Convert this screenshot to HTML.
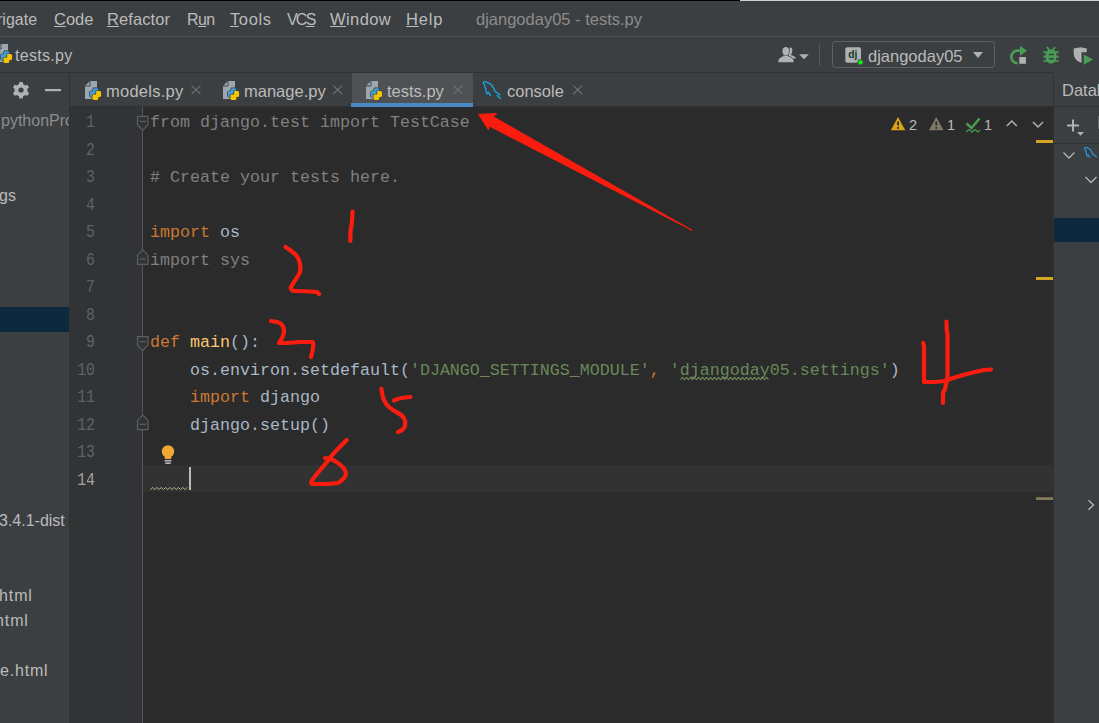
<!DOCTYPE html>
<html><head><meta charset="utf-8">
<style>
html,body{margin:0;padding:0;}
body{width:1099px;height:723px;overflow:hidden;position:relative;background:#3C3F41;font-family:"Liberation Sans",sans-serif;}
.a{position:absolute;}
.t{position:absolute;white-space:pre;color:#BBBBBB;font-size:16px;line-height:20px;}
.m{position:absolute;white-space:pre;font-family:"Liberation Mono",monospace;font-size:16.67px;line-height:20px;}
u{text-decoration:underline;text-decoration-thickness:1px;text-underline-offset:1px;text-decoration-color:#BBBBBB;}
</style></head>
<body>
<!-- top strip -->
<div class="a" style="left:0;top:0;width:740px;height:1px;background:#000"></div>
<div class="a" style="left:740px;top:0;width:359px;height:1px;background:#CFCFCF"></div>

<!-- menu bar -->
<div class="t" style="left:-3px;top:9.9px;font-size:16px">rigate</div>
<div class="t" style="left:54px;top:9.4px;font-size:16.5px"><u>C</u>ode</div>
<div class="t" style="left:107px;top:9.4px;font-size:16.5px;letter-spacing:0.1px"><u>R</u>efactor</div>
<div class="t" style="left:187px;top:9.9px;letter-spacing:-0.6px">R<u>u</u>n</div>
<div class="t" style="left:230px;top:9.4px;font-size:16.5px;letter-spacing:0.6px"><u>T</u>ools</div>
<div class="t" style="left:287px;top:9.9px;letter-spacing:-1.8px">VC<u>S</u></div>
<div class="t" style="left:330px;top:9.4px;font-size:16.5px;letter-spacing:0.4px"><u>W</u>indow</div>
<div class="t" style="left:406px;top:9.4px;font-size:16.5px;letter-spacing:0.8px"><u>H</u>elp</div>
<div class="t" style="left:476px;top:9.4px;color:#8C8C8C;font-size:16.5px">djangoday05 - tests.py</div>
<div class="a" style="left:0;top:36px;width:1099px;height:1px;background:#515151"></div>

<!-- nav bar -->
<div class="t" style="left:15px;top:46px;letter-spacing:0.3px">tests.py</div>
<div class="a" style="left:0;top:72px;width:1099px;height:1px;background:#323232"></div>

<!-- left panel -->
<div class="a" style="left:0;top:73px;width:69px;height:650px;overflow:hidden">
<div class="a" style="left:0;top:234px;width:69px;height:25px;background:#0D293E"></div>
<div class="t" style="left:1px;top:38px;color:#8C8C8C">pythonProject</div>
<div class="t" style="left:-1px;top:113px">gs</div>
<div class="t" style="left:-1px;top:438px">3.4.1-dist</div>
<div class="t" style="left:-1px;top:513px;letter-spacing:0.9px">html</div>
<div class="t" style="left:-5px;top:538px;letter-spacing:0.9px">html</div>
<div class="t" style="left:0px;top:588px;letter-spacing:0.8px">e.html</div>
</div>
<!-- left panel divider -->
<div class="a" style="left:69px;top:72px;width:1px;height:651px;background:#323232"></div>

<!-- tab bar -->
<div class="a" style="left:70px;top:106px;width:983px;height:1px;background:#323232"></div>
<div class="a" style="left:352px;top:73px;width:121px;height:30px;background:#4E5254"></div>
<div class="a" style="left:351px;top:103px;width:122px;height:4px;background:#4A88C7"></div>
<div class="t" style="left:106px;top:80.5px;font-size:16.5px;letter-spacing:0.25px">models.py</div>
<div class="t" style="left:244px;top:80.5px;font-size:16.5px">manage.py</div>
<div class="t" style="left:387px;top:80.5px;font-size:16.5px">tests.py</div>
<div class="t" style="left:507px;top:80.5px;font-size:16.5px">console</div>

<!-- editor -->
<div class="a" style="left:70px;top:107px;width:73px;height:616px;background:#313335"></div>
<div class="a" style="left:143px;top:107px;width:910px;height:616px;background:#2B2B2B"></div>
<div class="a" style="left:143px;top:465px;width:910px;height:27px;background:#323232"></div>
<div class="a" style="left:142px;top:107px;width:1px;height:616px;background:#555555"></div>

<!-- gutter numbers -->
<div class="m" style="left:0;width:95px;text-align:right;font-size:17px;transform:scale(0.87,1.1);transform-origin:94.5px 14.5px;top:113.06px;color:#606366">1</div>
<div class="m" style="left:0;width:95px;text-align:right;font-size:17px;transform:scale(0.87,1.1);transform-origin:94.5px 14.5px;top:140.59px;color:#606366">2</div>
<div class="m" style="left:0;width:95px;text-align:right;font-size:17px;transform:scale(0.87,1.1);transform-origin:94.5px 14.5px;top:168.12px;color:#606366">3</div>
<div class="m" style="left:0;width:95px;text-align:right;font-size:17px;transform:scale(0.87,1.1);transform-origin:94.5px 14.5px;top:195.65px;color:#606366">4</div>
<div class="m" style="left:0;width:95px;text-align:right;font-size:17px;transform:scale(0.87,1.1);transform-origin:94.5px 14.5px;top:223.18px;color:#606366">5</div>
<div class="m" style="left:0;width:95px;text-align:right;font-size:17px;transform:scale(0.87,1.1);transform-origin:94.5px 14.5px;top:250.71px;color:#606366">6</div>
<div class="m" style="left:0;width:95px;text-align:right;font-size:17px;transform:scale(0.87,1.1);transform-origin:94.5px 14.5px;top:278.24px;color:#606366">7</div>
<div class="m" style="left:0;width:95px;text-align:right;font-size:17px;transform:scale(0.87,1.1);transform-origin:94.5px 14.5px;top:305.77px;color:#606366">8</div>
<div class="m" style="left:0;width:95px;text-align:right;font-size:17px;transform:scale(0.87,1.1);transform-origin:94.5px 14.5px;top:333.30px;color:#606366">9</div>
<div class="m" style="left:0;width:95px;text-align:right;font-size:17px;transform:scale(0.87,1.1);transform-origin:94.5px 14.5px;top:360.83px;color:#606366">10</div>
<div class="m" style="left:0;width:95px;text-align:right;font-size:17px;transform:scale(0.87,1.1);transform-origin:94.5px 14.5px;top:388.36px;color:#606366">11</div>
<div class="m" style="left:0;width:95px;text-align:right;font-size:17px;transform:scale(0.87,1.1);transform-origin:94.5px 14.5px;top:415.89px;color:#606366">12</div>
<div class="m" style="left:0;width:95px;text-align:right;font-size:17px;transform:scale(0.87,1.1);transform-origin:94.5px 14.5px;top:443.42px;color:#606366">13</div>
<div class="m" style="left:0;width:95px;text-align:right;font-size:17px;transform:scale(0.87,1.1);transform-origin:94.5px 14.5px;top:470.95px;color:#A4A3A3">14</div>
<!-- code -->
<div class="m" style="left:150px;top:113.06px"><span style="color:#808080">from django.test import TestCase</span></div>
<div class="m" style="left:150px;top:168.12px"><span style="color:#808080"># Create your tests here.</span></div>
<div class="m" style="left:150px;top:223.18px"><span style="color:#CC7832">import</span><span style="color:#A9B7C6"> os</span></div>
<div class="m" style="left:150px;top:250.71px"><span style="color:#808080">import sys</span></div>
<div class="m" style="left:150px;top:333.30px"><span style="color:#CC7832">def</span><span style="color:#A9B7C6"> </span><span style="color:#FFC66D">main</span><span style="color:#A9B7C6">():</span></div>
<div class="m" style="left:150px;top:360.83px"><span style="color:#A9B7C6">    os.environ.setdefault(</span><span style="color:#6A8759">'DJANGO_SETTINGS_MODULE'</span><span style="color:#CC7832">, </span><span style="color:#6A8759">'djangoday05.settings'</span><span style="color:#A9B7C6">)</span></div>
<div class="m" style="left:150px;top:388.36px"><span style="color:#A9B7C6">    </span><span style="color:#CC7832">import</span><span style="color:#A9B7C6"> django</span></div>
<div class="m" style="left:150px;top:415.89px"><span style="color:#A9B7C6">    django.setup()</span></div>
<!-- right panel -->
<div class="a" style="left:1054px;top:72px;width:45px;height:651px;background:#3C3F41"></div>
<div class="a" style="left:1053px;top:72px;width:1px;height:651px;background:#323232"></div>
<div class="a" style="left:1054px;top:106px;width:45px;height:1px;background:#323232"></div>
<div class="a" style="left:1054px;top:143px;width:45px;height:1px;background:#323232"></div>
<div class="a" style="left:1054px;top:218px;width:45px;height:24px;background:#0D293E"></div>
<div class="t" style="left:1062px;top:80px;font-size:16.5px">Database</div>

<!-- overlay -->
<svg class="a" style="left:0;top:0" width="1099" height="723" viewBox="0 0 1099 723">
<!-- nav bar python icon (clipped) -->
<g transform="translate(-89,-37)">
<path d="M85,86 L90,81 H97 V99 H85 Z" fill="#9AA7B0"/>
<path d="M85,86 H90 V81" fill="none" stroke="#3C3F41" stroke-width="0.9"/>
<g stroke="#3C3F41" stroke-width="1.4" paint-order="stroke">
<path d="M93,88.3 H96.8 Q98.3,88.3 98.3,89.8 V93.6 H94.6 V96.9 H91.4 Q89.9,96.9 89.9,95.4 V92.6 Q89.9,91.1 91.4,91.1 H93 V89.8 Q93,88.3 94.5,88.3 Z" fill="#3D9FD8"/>
<path d="M99.6,91.1 Q101.1,91.1 101.1,92.6 V95.4 Q101.1,96.9 99.6,96.9 H98.3 V98.4 Q98.3,99.9 96.8,99.9 H94 Q92.5,99.9 92.5,98.4 V94.6 H96.2 V91.1 Z" fill="#F5C400"/>
</g>
</g>
<!-- gear -->
<g transform="translate(21,90)">
<path d="M-1.6,-8 h3.2 l0.6,2.3 a6,6 0 0 1 1.9,1.1 l2.3,-0.7 l1.6,2.8 l-1.7,1.6 a6,6 0 0 1 0,2.2 l1.7,1.6 l-1.6,2.8 l-2.3,-0.7 a6,6 0 0 1 -1.9,1.1 l-0.6,2.3 h-3.2 l-0.6,-2.3 a6,6 0 0 1 -1.9,-1.1 l-2.3,0.7 l-1.6,-2.8 l1.7,-1.6 a6,6 0 0 1 0,-2.2 l-1.7,-1.6 l1.6,-2.8 l2.3,0.7 a6,6 0 0 1 1.9,-1.1 z" fill="#AFB1B3"/>
<circle cx="0" cy="0" r="2.6" fill="#3C3F41"/>
</g>
<rect x="45" y="89" width="16" height="2.2" fill="#AFB1B3"/>
<!-- tabs icons -->
<g transform="translate(0,0)">
<path d="M85,86 L90,81 H97 V99 H85 Z" fill="#9AA7B0"/>
<path d="M85,86 H90 V81" fill="none" stroke="#3C3F41" stroke-width="0.9"/>
<g stroke="#3C3F41" stroke-width="1.4" paint-order="stroke">
<path d="M93,88.3 H96.8 Q98.3,88.3 98.3,89.8 V93.6 H94.6 V96.9 H91.4 Q89.9,96.9 89.9,95.4 V92.6 Q89.9,91.1 91.4,91.1 H93 V89.8 Q93,88.3 94.5,88.3 Z" fill="#3D9FD8"/>
<path d="M99.6,91.1 Q101.1,91.1 101.1,92.6 V95.4 Q101.1,96.9 99.6,96.9 H98.3 V98.4 Q98.3,99.9 96.8,99.9 H94 Q92.5,99.9 92.5,98.4 V94.6 H96.2 V91.1 Z" fill="#F5C400"/>
</g>
</g>
<g transform="translate(138,0)">
<path d="M85,86 L90,81 H97 V99 H85 Z" fill="#9AA7B0"/>
<path d="M85,86 H90 V81" fill="none" stroke="#3C3F41" stroke-width="0.9"/>
<g stroke="#3C3F41" stroke-width="1.4" paint-order="stroke">
<path d="M93,88.3 H96.8 Q98.3,88.3 98.3,89.8 V93.6 H94.6 V96.9 H91.4 Q89.9,96.9 89.9,95.4 V92.6 Q89.9,91.1 91.4,91.1 H93 V89.8 Q93,88.3 94.5,88.3 Z" fill="#3D9FD8"/>
<path d="M99.6,91.1 Q101.1,91.1 101.1,92.6 V95.4 Q101.1,96.9 99.6,96.9 H98.3 V98.4 Q98.3,99.9 96.8,99.9 H94 Q92.5,99.9 92.5,98.4 V94.6 H96.2 V91.1 Z" fill="#F5C400"/>
</g>
</g>
<g transform="translate(281,0)">
<path d="M85,86 L90,81 H97 V99 H85 Z" fill="#9AA7B0"/>
<path d="M85,86 H90 V81" fill="none" stroke="#3C3F41" stroke-width="0.9"/>
<g stroke="#3C3F41" stroke-width="1.4" paint-order="stroke">
<path d="M93,88.3 H96.8 Q98.3,88.3 98.3,89.8 V93.6 H94.6 V96.9 H91.4 Q89.9,96.9 89.9,95.4 V92.6 Q89.9,91.1 91.4,91.1 H93 V89.8 Q93,88.3 94.5,88.3 Z" fill="#3D9FD8"/>
<path d="M99.6,91.1 Q101.1,91.1 101.1,92.6 V95.4 Q101.1,96.9 99.6,96.9 H98.3 V98.4 Q98.3,99.9 96.8,99.9 H94 Q92.5,99.9 92.5,98.4 V94.6 H96.2 V91.1 Z" fill="#F5C400"/>
</g>
</g>
<path d="M483.5,83.5 C483,81.5 485.5,81 487,82.5 C490,83 493,86 494.5,90.5 C495.5,92.5 498,93 500,94.8 M497.3,95.5 L500.5,98.5 M484,84 C485,86 486.3,89 486.3,92.5 L487.3,93.8 L488.3,92.2 L490.5,95.5" fill="none" stroke="#1BA1E2" stroke-width="1.4" stroke-linejoin="round" stroke-linecap="round"/>
<path d="M191.6,85.6 L200.4,94 M200.4,85.6 L191.6,94" stroke="#6B7073" stroke-width="1.2"/>
<path d="M333.3,85.6 L342.1,94 M342.1,85.6 L333.3,94" stroke="#6B7073" stroke-width="1.2"/>
<path d="M453.4,85.6 L462.2,94 M462.2,85.6 L453.4,94" stroke="#6B7073" stroke-width="1.2"/>
<path d="M573.4,85.6 L582.2,94 M582.2,85.6 L573.4,94" stroke="#6B7073" stroke-width="1.2"/>
<!-- right toolbar -->
<path d="M789.8,47.6 C791.6,47.2 792.6,48.8 792.3,51 C792.1,52.8 791.4,54.3 790.8,55.1 C792.8,55.7 795.3,56.8 796.2,58.6 H793 C791.8,57.3 790,56.4 788.5,56 Z" fill="#AFB1B3"/>
<g fill="#AFB1B3" stroke="#3C3F41" stroke-width="1" paint-order="stroke">
<path d="M778.2,62.2 C778.2,58.8 780.2,57.2 783.2,56.2 L784,55.2 H787.6 L788.4,56.2 C791.4,57.2 793.8,58.8 793.8,62.2 Z"/>
<ellipse cx="785.8" cy="51.2" rx="3.3" ry="4.2"/>
</g>
<path d="M799.2,54.2 H808.9 L804,59.3 Z" fill="#AFB1B3"/>
<rect x="819" y="44" width="1" height="22" fill="#555758"/>
<rect x="832.5" y="41.5" width="162" height="26" rx="3" fill="none" stroke="#5E6060" stroke-width="1"/>
<rect x="845.3" y="47.3" width="15.7" height="15.5" rx="2" fill="#AFB1B3"/>
<text x="848.3" y="57.8" font-family="Liberation Sans" font-weight="bold" font-size="11" fill="#0E3B26" textLength="9" lengthAdjust="spacingAndGlyphs">dj</text>
<circle cx="860.5" cy="62.3" r="2.8" fill="#18E818" stroke="#3C3F41" stroke-width="1"/>
<path d="M973,52 H983 L978,58 Z" fill="#AFB1B3"/>
<text x="868" y="61.5" font-family="Liberation Sans" font-size="16.5" fill="#BBBBBB">djangoday05</text>
<!-- rerun -->
<path d="M1017.6,63.2 A6.3,6.3 0 0 1 1017.6,50.6 H1021" fill="none" stroke="#499C54" stroke-width="2.7"/>
<path d="M1020,45.8 L1027,50.8 L1020,55.8 Z" fill="#499C54"/>
<rect x="1019.3" y="57" width="6.6" height="6.8" fill="#AFB1B3"/>
<!-- bug -->
<path d="M1047,47 L1049.3,50.5 M1055,47 L1052.7,50.5" stroke="#499C54" stroke-width="1.8"/>
<path d="M1051,49.5 C1054.5,49.5 1056.6,52 1056.6,56 C1056.6,61 1054,63.6 1051,63.6 C1048,63.6 1045.4,61 1045.4,56 C1045.4,52 1047.5,49.5 1051,49.5 Z" fill="#499C54"/>
<path d="M1043.2,52.2 H1058.8 M1043.2,56.6 H1058.8 M1043.2,61 H1058.8" stroke="#499C54" stroke-width="1.7"/>
<path d="M1048.9,54.4 H1053.7 M1048.9,58.8 H1053.7" stroke="#3C3F41" stroke-width="1.5"/>
<!-- coverage -->
<path d="M1073.7,48.5 L1080.5,47.2 L1086.8,48.5 V52.2 H1081.5 V62.7 C1077,61.5 1073.7,58 1073.7,53 Z" fill="#AFB1B3"/>
<path d="M1083.8,54.4 L1093,59.5 L1083.8,64.8 Z" fill="#499C54"/>

<!-- fold markers & line -->
<rect x="142" y="107" width="1" height="616" fill="#555759"/>
<path d="M137.5,116.4 H148 V124.7 L142.8,130.4 L137.5,124.7 Z" fill="#313335" stroke="#5C5F61" stroke-width="1.2"/><path d="M139.5,121.4 H146" stroke="#5C5F61" stroke-width="1.2"/>
<path d="M137.5,264.4 H148 V255.2 L142.8,249.8 L137.5,255.2 Z" fill="#313335" stroke="#5C5F61" stroke-width="1.2"/><path d="M139.5,259.1 H146" stroke="#5C5F61" stroke-width="1.2"/>
<path d="M137.5,336.7 H148 V345.0 L142.8,350.7 L137.5,345.0 Z" fill="#313335" stroke="#5C5F61" stroke-width="1.2"/><path d="M139.5,341.7 H146" stroke="#5C5F61" stroke-width="1.2"/>
<path d="M137.5,429.6 H148 V420.4 L142.8,415.0 L137.5,420.4 Z" fill="#313335" stroke="#5C5F61" stroke-width="1.2"/><path d="M139.5,424.3 H146" stroke="#5C5F61" stroke-width="1.2"/>

<!-- warnings -->
<path d="M898,117 L905.3,130.2 H890.8 Z" fill="#D9A21B"/>
<rect x="897.2" y="121.5" width="1.8" height="4" fill="#2B2B2B"/><rect x="897.2" y="127" width="1.8" height="1.8" fill="#2B2B2B"/>
<text x="909" y="130" font-family="Liberation Sans" font-size="14.5" fill="#BBBBBB">2</text>
<path d="M936.2,117 L943.5,130.2 H929 Z" fill="#7F7A65"/>
<rect x="935.4" y="121.5" width="1.8" height="4" fill="#2B2B2B"/><rect x="935.4" y="127" width="1.8" height="1.8" fill="#2B2B2B"/>
<text x="947" y="130" font-family="Liberation Sans" font-size="14.5" fill="#BBBBBB">1</text>
<path d="M966.5,123.5 L971.5,128 L979.5,118.5" fill="none" stroke="#499C54" stroke-width="2.6"/>
<path d="M966,132 L969,129.5 L972,132 L975,129.5 L978,132 L980,130" fill="none" stroke="#499C54" stroke-width="1.1"/>
<text x="984" y="130" font-family="Liberation Sans" font-size="14.5" fill="#BBBBBB">1</text>
<path d="M1006.8,126 L1011.8,121 L1016.8,126" fill="none" stroke="#AFB1B3" stroke-width="1.5"/>
<path d="M1033,122 L1038,127 L1043,122" fill="none" stroke="#AFB1B3" stroke-width="1.5"/>
<rect x="1036" y="140" width="17" height="3" fill="#D4A520"/>
<rect x="1036" y="277" width="17" height="3" fill="#D4A520"/>
<rect x="1036" y="497.2" width="17" height="2.8" fill="#857B5A"/>

<!-- bulb -->
<circle cx="168" cy="451.5" r="6.2" fill="#F0A732"/>
<rect x="164.8" y="455" width="6.4" height="4" fill="#F0A732"/>
<rect x="164.5" y="460" width="7" height="1.5" fill="#AFB1B3"/>
<rect x="165.3" y="462.3" width="5.4" height="1.7" fill="#AFB1B3"/>
<!-- caret & squiggles -->
<rect x="189" y="467" width="2" height="23" fill="#BBBBBB"/>
<path d="M150.5,489.6 L152.65,487.40 L154.80,489.60 L156.95,487.40 L159.10,489.60 L161.25,487.40 L163.40,489.60 L165.55,487.40 L167.70,489.60 L169.85,487.40 L172.00,489.60 L174.15,487.40 L176.30,489.60 L178.45,487.40 L180.60,489.60 L182.75,487.40 L184.90,489.60 L187.05,487.40" fill="none" stroke="#BAB88A" stroke-width="1" stroke-linejoin="miter"/>
<path d="M680.5,379.6 L682.50,377.40 L684.50,379.60 L686.50,377.40 L688.50,379.60 L690.50,377.40 L692.50,379.60 L694.50,377.40 L696.50,379.60 L698.50,377.40 L700.50,379.60 L702.50,377.40 L704.50,379.60 L706.50,377.40 L708.50,379.60 L710.50,377.40 L712.50,379.60 L714.50,377.40 L716.50,379.60 L718.50,377.40 L720.50,379.60 L722.50,377.40 L724.50,379.60 L726.50,377.40 L728.50,379.60 L730.50,377.40 L732.50,379.60 L734.50,377.40 L736.50,379.60 L738.50,377.40 L740.50,379.60 L742.50,377.40 L744.50,379.60 L746.50,377.40 L748.50,379.60 L750.50,377.40 L752.50,379.60 L754.50,377.40 L756.50,379.60 L758.50,377.40 L760.50,379.60 L762.50,377.40 L764.50,379.60 L766.50,377.40 L768.50,379.60" fill="none" stroke="#6F8C5C" stroke-width="1.05" stroke-linejoin="miter"/>

<!-- right panel icons -->
<path d="M1073,119.5 V131.5 M1067,125.5 H1079" stroke="#AFB1B3" stroke-width="2"/>
<path d="M1077,132 H1084 L1080.5,135.8 Z" fill="#AFB1B3"/>
<path d="M1063.5,152.5 L1069,158 L1074.5,152.5" fill="none" stroke="#AFB1B3" stroke-width="1.4"/>
<g transform="translate(1085,147.5) scale(0.72)"><path d="M-0.5,1.5 C-1,-0.5 1.5,-1 3,0.5 C6,1 9,4 10.5,8.5 C11.5,10.5 14,11 16,12.8 M0,2 C1,4 2.3,7 2.3,10.5 L3.3,11.8 L4.3,10.2 L6.5,13.5" fill="none" stroke="#1BA1E2" stroke-width="1.6" stroke-linejoin="round" stroke-linecap="round"/></g>
<path d="M1085.5,177 L1091,182.5 L1096.5,177" fill="none" stroke="#AFB1B3" stroke-width="1.4"/>
<path d="M1088.5,500.2 L1093.5,505 L1088.5,509.8" fill="none" stroke="#AFB1B3" stroke-width="1.4"/>

<rect x="1098" y="116" width="1" height="13" fill="#666A6C"/>
<!-- red annotations -->
<g fill="none" stroke="#FA1D0F" stroke-width="4.2" stroke-linecap="round" stroke-linejoin="round">
<path d="M352.6,211.5 L351.8,224 L350.6,230 L350.3,241"/>
<path d="M285.6,247 C288,249 293,252 296,255 C300,259 301,268 300,272 C298,277 294,281 291,287 C290,290 293,291 296,291 L310,291.5 L317,292 L319,294"/>
<path d="M271,321 L277,322 C281,323 284,326 284,331 C284,336 281,340 279,343 L287,343 L300,342 L313,342 C314,346 313,350 311,357"/>
<path d="M923.2,342.8 L924,347 L924,382 L935,382 L945,381 L953,378 L963,375 L975,372 L984,370 L991,369.5"/>
<path d="M946.5,321.6 L946.8,331 L947.5,334 L947.5,377 L945,389 L943,393 L943,403"/>
<path d="M381.4,388.8 C382,392 382,396 384,400 C386,405 392,410 398,413 C404,416 406,421 405,426 C404,429 401,431 398,432"/>
<path d="M394,400.5 C398,398 404,397.5 410.5,397"/>
<path d="M346.7,440 C340,447 334,452 330,458 C325,465 318,472 313,479 C311,482 310,484 314,484 L328,484 L338,483 C343,480 346,476 346,473 C345,468 340,464 335,461 C331,459 328,458 325,458"/>
</g>
<path d="M478.6,114.4 L496.8,113.6 L492.9,116.5 L692.2,230.4 L489.1,126 L488.5,129.8 Z" fill="#FA1D0F" stroke="#FA1D0F" stroke-width="1" stroke-linejoin="round"/>
</svg>
</body></html>
